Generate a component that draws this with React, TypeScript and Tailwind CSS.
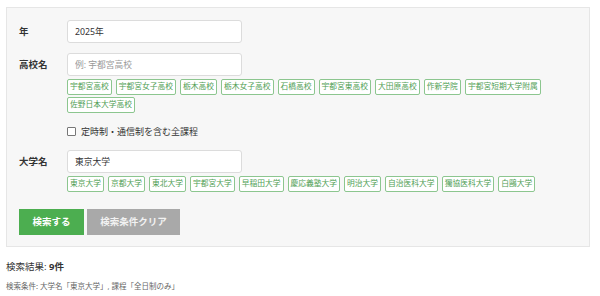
import { useState } from "react";

const highSchools = [
  "宇都宮高校",
  "宇都宮女子高校",
  "栃木高校",
  "栃木女子高校",
  "石橋高校",
  "宇都宮東高校",
  "大田原高校",
  "作新学院",
  "宇都宮短期大学附属",
  "佐野日本大学高校",
];

const universities = [
  "東京大学",
  "京都大学",
  "東北大学",
  "宇都宮大学",
  "早稲田大学",
  "慶応義塾大学",
  "明治大学",
  "自治医科大学",
  "獨協医科大学",
  "白鷗大学",
];

function Chips({ items }: { items: string[] }) {
  return (
    <div className="mt-[3px] flex w-[480px] flex-wrap gap-x-[4px] gap-y-[2px]">
      {items.map((item) => (
        <span
          key={item}
          className="flex h-[16px] items-center rounded-[2px] border border-[#8cc68f] bg-white px-[2px] text-[7.75px] leading-none text-[#4f9e54]"
        >
          {item}
        </span>
      ))}
    </div>
  );
}

function Field({
  label,
  children,
}: {
  label: string;
  children: React.ReactNode;
}) {
  return (
    <div className="flex">
      <div className="flex h-[23px] w-[48px] shrink-0 items-center text-[9.5px] leading-none font-bold text-[#333]">
        {label}
      </div>
      <div>{children}</div>
    </div>
  );
}

function TextInput({ value, placeholder }: { value?: string; placeholder?: string }) {
  return (
    <input
      defaultValue={value}
      placeholder={placeholder}
      className="block h-[23px] w-[175px] rounded-[3px] border border-[#dcdcdc] bg-white px-[7px] text-[8.75px] text-[#333] outline-none placeholder:text-[#999]"
    />
  );
}

export default function App() {
  const [allCourses, setAllCourses] = useState(false);

  return (
    <div
      className="h-[296px] w-[600px] bg-white pl-[6px] pt-[7px]"
      style={{ fontFamily: '"Noto Sans", "Noto Sans CJK JP", sans-serif' }}
    >
      <div className="w-[584px] border border-[#e6e6e6] bg-[#f7f7f7] px-[12px] pb-[11px] pt-[12px]">
        <Field label="年">
          <TextInput value="2025年" />
        </Field>

        <div className="mt-[10px]">
          <Field label="高校名">
            <TextInput placeholder="例: 宇都宮高校" />
            <Chips items={highSchools} />
          </Field>
        </div>

        <label className="ml-[48px] mt-[12px] flex h-[12px] items-center gap-[5px] text-[9px] leading-none text-[#333]">
          <input
            type="checkbox"
            checked={allCourses}
            onChange={(e) => setAllCourses(e.target.checked)}
            className="block h-[9px] w-[9px] appearance-none rounded-[1px] border border-[#777] bg-white"
          />
          定時制・通信制を含む全課程
        </label>

        <div className="mt-[13px]">
          <Field label="大学名">
            <TextInput value="東京大学" />
            <Chips items={universities} />
          </Field>
        </div>

        <div className="mt-[17px] flex gap-[3px]">
          <button className="h-[26px] w-[65px] bg-[#4cae50] text-[9.5px] font-bold text-white">
            検索する
          </button>
          <button className="h-[26px] w-[93px] bg-[#a9a9a9] text-[9.5px] font-bold text-[#f2f2f2]">
            検索条件クリア
          </button>
        </div>
      </div>

      <p className="mt-[13px] text-[9.5px] leading-[14px] text-[#333]">
        検索結果: <span className="font-bold">9件</span>
      </p>
      <p className="mt-[7px] text-[7.5px] leading-[10px] text-[#666]">
        検索条件: 大学名「東京大学」, 課程「全日制のみ」
      </p>
    </div>
  );
}
